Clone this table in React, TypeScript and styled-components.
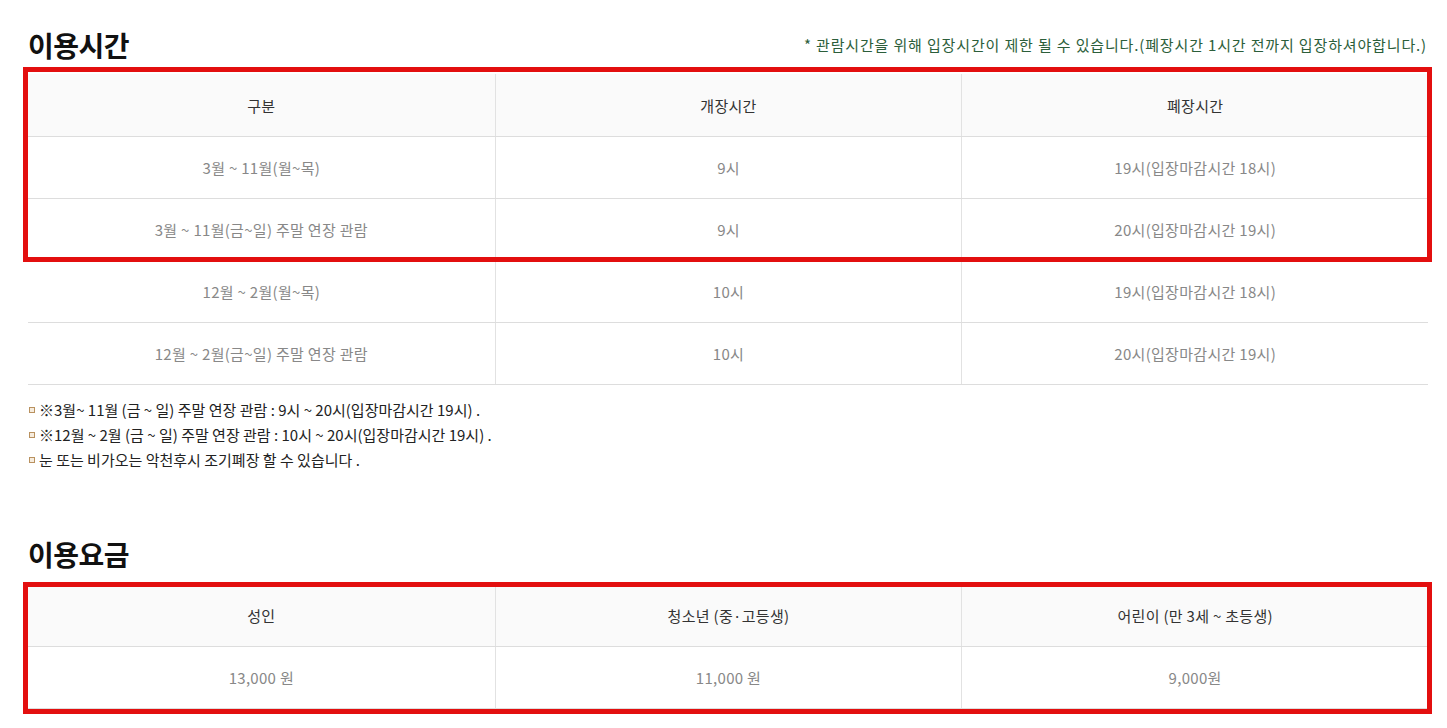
import React, { FC } from 'react';
import styled, { createGlobalStyle } from 'styled-components';

const GlobalStyle = createGlobalStyle`
  *, *::before, *::after {
    box-sizing: border-box;
  }
  body {
    margin: 0;
    background: #fff;
    font-family: "Noto Sans CJK KR", "Noto Sans", sans-serif;
    color: #333;
  }
`;

const Page = styled.div`
  min-height: 728px;
  padding: 0 19px 14px 28px;
`;

const SectionHead = styled.div<{ $top: number; $bottom: number }>`
  display: flex;
  align-items: center;
  justify-content: space-between;
  margin-top: ${p => p.$top}px;
  margin-bottom: ${p => p.$bottom}px;
`;

const Title = styled.h2`
  margin: 0;
  font-size: 28px;
  line-height: 40px;
  font-weight: 700;
  color: #111;
  letter-spacing: -0.5px;
`;

const Note = styled.p`
  margin: 0;
  font-size: 15px;
  line-height: 20px;
  color: #2c5e3a;
  letter-spacing: 0.85px;
  padding-right: 1px;
`;

const Table = styled.div`
  border-bottom: 1px solid #ddd;
`;

// red marker frame drawn over a group of rows
const Highlight = styled.div<{ $top: number; $bottom: number }>`
  position: relative;
  &::after {
    content: '';
    position: absolute;
    top: -${p => p.$top}px;
    left: -5px;
    right: -4px;
    bottom: -${p => p.$bottom}px;
    border: 5px solid #e30f0f;
    pointer-events: none;
  }
`;

const Row = styled.div<{ $head?: boolean; $lined?: boolean }>`
  display: grid;
  grid-template-columns: 1fr 1fr 1fr;
  height: 62px;
  background: ${p => (p.$head ? '#fafafa' : '#fff')};
  border-top: ${p => (p.$lined ? '1px solid #ddd' : 'none')};
`;

const Cell = styled.div<{ $head?: boolean }>`
  display: flex;
  align-items: center;
  justify-content: center;
  font-size: 15px;
  letter-spacing: 0.3px;
  color: ${p => (p.$head ? '#333' : '#888')};
  & + & {
    border-left: 1px solid #e2e2e2;
  }
`;

const List = styled.ul`
  list-style: none;
  margin: 12px 0 0;
  padding: 0;
`;

const Item = styled.li`
  display: flex;
  align-items: center;
  font-size: 15px;
  line-height: 25px;
  color: #222;
  &::before {
    content: '';
    width: 6px;
    height: 6px;
    border: 1px solid #b9915f;
    background: #f6ecde;
    margin: 0 4px 0 1px;
    flex: none;
  }
`;

const TableRow: FC<{ cells: string[]; head?: boolean; lined?: boolean }> = ({ cells, head, lined }) => (
  <Row $head={head} $lined={lined}>
    {cells.map((c, i) => (
      <Cell key={i} $head={head}>
        {c}
      </Cell>
    ))}
  </Row>
);

const App: FC = () => (
  <>
    <GlobalStyle />
    <Page>
      <SectionHead $top={25} $bottom={9}>
        <Title>이용시간</Title>
        <Note>* 관람시간을 위해 입장시간이 제한 될 수 있습니다.(폐장시간 1시간 전까지 입장하셔야합니다.)</Note>
      </SectionHead>
      <Table>
        <Highlight $top={7} $bottom={2}>
          <TableRow head cells={['구분', '개장시간', '폐장시간']} />
          <TableRow lined cells={['3월 ~ 11월(월~목)', '9시', '19시(입장마감시간 18시)']} />
          <TableRow lined cells={['3월 ~ 11월(금~일) 주말 연장 관람', '9시', '20시(입장마감시간 19시)']} />
        </Highlight>
        <TableRow lined cells={['12월 ~ 2월(월~목)', '10시', '19시(입장마감시간 18시)']} />
        <TableRow lined cells={['12월 ~ 2월(금~일) 주말 연장 관람', '10시', '20시(입장마감시간 19시)']} />
      </Table>
      <List>
        <Item>※3월~ 11월 (금 ~ 일) 주말 연장 관람 : 9시 ~ 20시(입장마감시간 19시) .</Item>
        <Item>※12월 ~ 2월 (금 ~ 일) 주말 연장 관람 : 10시 ~ 20시(입장마감시간 19시) .</Item>
        <Item>눈 또는 비가오는 악천후시 조기폐장 할 수 있습니다 .</Item>
      </List>
      <SectionHead $top={62} $bottom={10}>
        <Title>이용요금</Title>
      </SectionHead>
      <Table>
        <Highlight $top={2} $bottom={6}>
          <TableRow head cells={['성인', '청소년 (중·고등생)', '어린이 (만 3세 ~ 초등생)']} />
          <TableRow lined cells={['13,000 원', '11,000 원', '9,000원']} />
        </Highlight>
      </Table>
    </Page>
  </>
);

export default App;
